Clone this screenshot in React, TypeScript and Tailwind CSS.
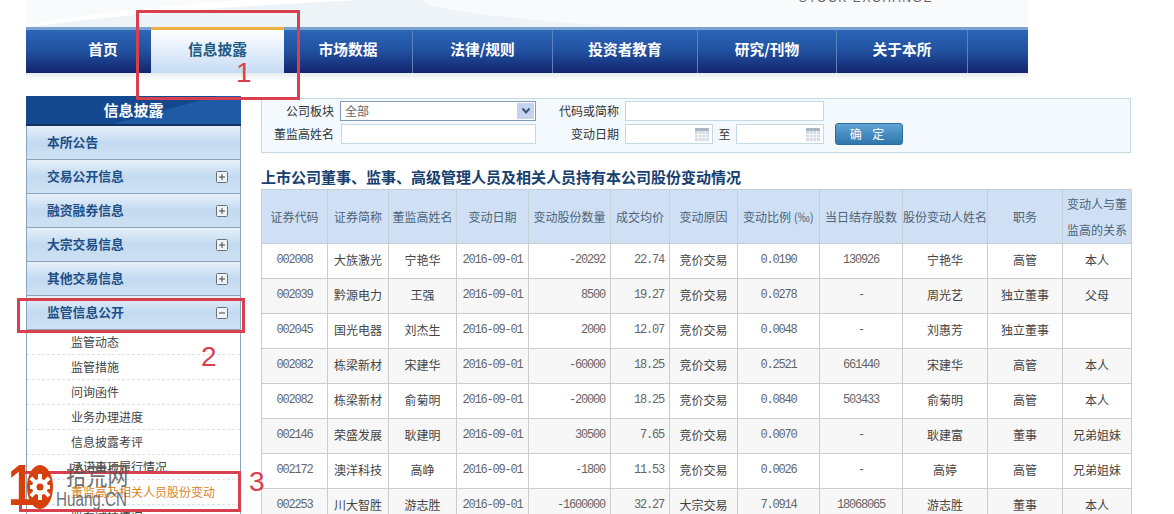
import React from "react";

const NAV = [
  { t: "首页", w: "w-[125px] pl-[29px]" },
  { t: "信息披露", w: "w-[133px]", active: true },
  { t: "市场数据", w: "w-[129px]" },
  { t: "法律/规则", w: "w-[140px]" },
  { t: "投资者教育", w: "w-[145px]" },
  { t: "研究/刊物", w: "w-[139px]" },
  { t: "关于本所", w: "w-[131px]" },
];

const SECTIONS = [
  { t: "本所公告" },
  { t: "交易公开信息", icon: "+" },
  { t: "融资融券信息", icon: "+" },
  { t: "大宗交易信息", icon: "+" },
  { t: "其他交易信息", icon: "+" },
  { t: "监管信息公开", icon: "-" },
];

const SUBS = [
  "监管动态",
  "监管措施",
  "问询函件",
  "业务办理进度",
  "信息披露考评",
  "承诺事项履行情况",
  "董监高及相关人员股份变动",
  "股东减持情况",
];

const COLS = [66, 61, 68, 72, 82, 59, 68, 82, 83, 85, 75, 69];

const HEAD = [
  "证券代码",
  "证券简称",
  "董监高姓名",
  "变动日期",
  "变动股份数量",
  "成交均价",
  "变动原因",
  "变动比例 (‰)",
  "当日结存股数",
  "股份变动人姓名",
  "职务",
  "变动人与董监高的关系",
];

const ROWS = [
  ["002008", "大族激光", "宁艳华", "2016-09-01", "-20292", "22.74", "竞价交易", "0.0190", "130926", "宁艳华", "高管", "本人"],
  ["002039", "黔源电力", "王强", "2016-09-01", "8500", "19.27", "竞价交易", "0.0278", "-", "周光艺", "独立董事", "父母"],
  ["002045", "国光电器", "刘杰生", "2016-09-01", "2000", "12.07", "竞价交易", "0.0048", "-", "刘惠芳", "独立董事", ""],
  ["002082", "栋梁新材", "宋建华", "2016-09-01", "-60000", "18.25", "竞价交易", "0.2521", "661440", "宋建华", "高管", "本人"],
  ["002082", "栋梁新材", "俞菊明", "2016-09-01", "-20000", "18.25", "竞价交易", "0.0840", "503433", "俞菊明", "高管", "本人"],
  ["002146", "荣盛发展", "耿建明", "2016-09-01", "30500", "7.65", "竞价交易", "0.0070", "-", "耿建富", "董事", "兄弟姐妹"],
  ["002172", "澳洋科技", "高峥", "2016-09-01", "-1800", "11.53", "竞价交易", "0.0026", "-", "高婷", "高管", "兄弟姐妹"],
  ["002253", "川大智胜", "游志胜", "2016-09-01", "-1600000", "32.27", "大宗交易", "7.0914", "18068065", "游志胜", "董事", "本人"],
];

const MONO = new Set([0, 3, 4, 5, 7, 8]);
const RIGHT = new Set([4, 5]);

function ToggleIcon({ kind }: { kind: string }) {
  return (
    <svg width="12" height="12" viewBox="0 0 12 12" className="shrink-0">
      <rect x="0.5" y="0.5" width="11" height="11" rx="1" fill="#eef3f7" stroke="#66727e" />
      <path d="M3 6H9" stroke="#444" strokeWidth="1" />
      {kind === "+" && <path d="M6 3V9" stroke="#444" strokeWidth="1" />}
    </svg>
  );
}

function CalendarIcon() {
  return (
    <svg width="14" height="13" viewBox="0 0 14 13" className="shrink-0">
      <rect x="0" y="0" width="14" height="13" fill="#d3dae2" />
      <rect x="0" y="0" width="14" height="3" fill="#aab6c4" />
      <path d="M0 6.5H14M0 9.5H14M3.5 3V13M7 3V13M10.5 3V13" stroke="#f5f7fa" strokeWidth="1" />
    </svg>
  );
}

function FormLabel({ w, children }: { w: string; children: React.ReactNode }) {
  return <div className={`${w} text-right text-[12px] leading-[18px] text-[#333] shrink-0`}>{children}</div>;
}

export default function App() {
  return (
    <div
      className="relative w-[1174px] h-[514px] overflow-hidden bg-white"
      style={{ fontFamily: '"Noto Sans CJK SC", "Liberation Sans", sans-serif' }}
    >
      {/* header */}
      <div className="ml-[26px] w-[1002px] h-[27px] overflow-hidden bg-[#f8fafc] flex justify-end relative">
        <svg width="1002" height="27" viewBox="0 0 1002 27" className="absolute left-0 top-0">
          <path d="M0 27C100 12 260 4 340 0H400C380 6 480 20 600 27Z" fill="#eef3f8" />
          <path d="M0 25C60 14 150 4 220 0H330C240 4 120 12 0 27Z" fill="#ffffff" />
        </svg>
        <div
          className="relative mr-[95px] -mt-[8px] h-[12px] text-[12px] leading-[12px] tracking-[1.6px] text-[#666]"
          style={{ fontFamily: '"Liberation Sans", sans-serif' }}
        >
          STOCK EXCHANGE
        </div>
      </div>

      {/* nav */}
      <div className="ml-[26px] w-[1002px] h-[46px] flex border-t-[3px] border-[#7ba3d0] bg-gradient-to-b from-[#2b66b8] via-[#21509f] to-[#13246c]">
        {NAV.map((n) =>
          n.active ? (
            <div
              key={n.t}
              className={`${n.w} -mt-[3px] h-[46px] pb-[5px] border-t-[3px] border-[#efb042] bg-gradient-to-b from-white to-[#c6dcf5] flex items-center justify-center text-[14.7px] font-bold text-[#1c5a85]`}
            >
              {n.t}
            </div>
          ) : (
            <div
              key={n.t}
              className={`${n.w} ${n.t === "首页" ? "" : "border-r border-[#5c84bb]"} pb-[5px] flex items-center justify-center text-[14.7px] font-bold text-white`}
            >
              {n.t}
            </div>
          )
        )}
      </div>
      <div className="ml-[26px] w-[1002px] h-[7px] bg-gradient-to-b from-[#e6ebf0] to-white" />

      {/* body */}
      <div className="flex pl-[26px] gap-[20px]">
        {/* sidebar */}
        <div className="w-[215px] mt-[16px] shrink-0">
          <div className="h-[30px] bg-[linear-gradient(165deg,#15498f_60%,#1f5aa6_60%)] border-b-2 border-[#15325f] flex items-center justify-center text-[15px] font-bold text-white">
            信息披露
          </div>
          <div className="border-x border-[#8aa5bb]">
            {SECTIONS.map((s) => (
              <div
                key={s.t}
                className="h-[34px] pl-[20px] pr-[12px] flex items-center justify-between border-b border-[#8aa5bb] bg-gradient-to-b from-[#e6f0fa] via-[#c3daf0] to-[#cfe1f3]"
              >
                <span className="text-[12.8px] font-bold text-[#1d4f86] -mt-[2px]">{s.t}</span>
                {s.icon && <ToggleIcon kind={s.icon} />}
              </div>
            ))}
            {SUBS.map((s, i) => (
              <div
                key={s}
                className={`h-[25px] pl-[44px] flex items-center border-b border-dashed border-[#e2e2e2] text-[12px] ${
                  i === 6 ? "text-[#d9841f]" : "text-[#444]"
                }`}
              >
                {s}
              </div>
            ))}
          </div>
        </div>

        {/* main */}
        <div className="w-[870px] mt-[18px] shrink-0">
          <div className="h-[55px] border border-[#c5d9e5] bg-[#f3f9fd] pt-[2px]">
            <div className="flex items-center h-[20px]">
              <FormLabel w="w-[72px]">公司板块</FormLabel>
              <div className="ml-[6px] w-[196px] h-[20px] border border-[#7f9db9] bg-white flex items-center justify-between pl-[4px] pr-[1px] text-[12px] text-[#666]">
                <span>全部</span>
                <span className="w-[17px] h-[16px] bg-[#c5d3f0] flex items-center justify-center">
                  <svg width="10" height="8" viewBox="0 0 10 8">
                    <path d="M1.5 1.5L5 5.5L8.5 1.5" fill="none" stroke="#3c5578" strokeWidth="2" />
                  </svg>
                </span>
              </div>
              <FormLabel w="w-[83px]">代码或简称</FormLabel>
              <div className="ml-[6px] w-[199px] h-[20px] border border-[#c5d9e5] bg-white" />
            </div>
            <div className="flex items-center h-[22px] mt-[2px]">
              <FormLabel w="w-[72px]">董监高姓名</FormLabel>
              <div className="ml-[7px] w-[195px] h-[20px] border border-[#c5d9e5] bg-white" />
              <FormLabel w="w-[83px]">变动日期</FormLabel>
              <div className="ml-[6px] w-[88px] h-[20px] border border-[#c5d9e5] bg-white flex items-center justify-end pr-[3px]">
                <CalendarIcon />
              </div>
              <div className="w-[23px] text-center text-[12px] text-[#333]">至</div>
              <div className="w-[88px] h-[20px] border border-[#c5d9e5] bg-white flex items-center justify-end pr-[3px]">
                <CalendarIcon />
              </div>
              <div className="ml-[11px] w-[68px] h-[22px] rounded-[3px] border border-[#2d6d9f] bg-gradient-to-b from-[#5fa4d3] to-[#2f76ad] flex items-center justify-center text-[12px] tracking-[4px] text-white">
                确 定
              </div>
            </div>
          </div>

          <div className="h-[36px] flex items-end pb-[2px] text-[15px] leading-[20px] font-bold text-[#16406f]">
            上市公司董事、监事、高级管理人员及相关人员持有本公司股份变动情况
          </div>

          <table className="w-[870px] table-fixed border-collapse text-[12px] text-[#444]">
            <colgroup>
              {COLS.map((c, i) => (
                <col key={i} style={{ width: c }} />
              ))}
            </colgroup>
            <thead>
              <tr className="h-[54px] bg-[#cfe0f5]">
                {HEAD.map((h, i) => (
                  <th
                    key={i}
                    className={`border border-[#c6ced8] font-normal text-[#4d6478] leading-[26px] p-0 ${
                      i === 11 ? "px-[3px]" : ""
                    } text-center`}
                  >
                    {h}
                  </th>
                ))}
              </tr>
            </thead>
            <tbody>
              {ROWS.map((r, ri) => (
                <tr key={ri} className={`h-[35px] ${ri % 2 === 1 ? "bg-[#f7f7f7]" : "bg-white"}`}>
                  {r.map((c, i) => (
                    <td
                      key={i}
                      className={`border border-[#cccccc] p-0 pb-[2px] ${RIGHT.has(i) ? "text-right pr-[5px]" : "text-center"} ${
                        MONO.has(i) ? "text-[12px] tracking-[-1.2px] text-[#666]" : ""
                      }`}
                      style={MONO.has(i) ? { fontFamily: '"Liberation Mono", monospace' } : undefined}
                    >
                      {c}
                    </td>
                  ))}
                </tr>
              ))}
            </tbody>
          </table>
        </div>
      </div>

      {/* annotation overlays */}
      <div className="absolute left-[136px] top-[10px] w-[164px] h-[90px] border-[3px] border-[#d9404f]" />
      <div className="absolute left-[17px] top-[298px] w-[228px] h-[35px] border-[3px] border-[#d9404f]" />
      <div className="absolute left-[19px] top-[471px] w-[222px] h-[41px] border-[3px] border-[#d9404f]" />
      <div
        className="absolute left-[236px] top-[59px] text-[28px] leading-[28px] text-[#d9404f]"
        style={{ fontFamily: '"Liberation Sans", sans-serif' }}
      >
        1
      </div>
      <div
        className="absolute left-[201px] top-[343px] text-[28px] leading-[28px] text-[#d9404f]"
        style={{ fontFamily: '"Liberation Sans", sans-serif' }}
      >
        2
      </div>
      <div
        className="absolute left-[249px] top-[468px] text-[28px] leading-[28px] text-[#d9404f]"
        style={{ fontFamily: '"Liberation Sans", sans-serif' }}
      >
        3
      </div>

      {/* watermark logo */}
      <div
        className="absolute left-[8px] top-[456px] text-[58px] leading-[58px] font-bold text-[#d6400c] scale-x-[0.8] origin-left"
        style={{ fontFamily: '"Liberation Sans", sans-serif' }}
      >
        1
      </div>
      <svg width="30" height="48" viewBox="0 0 30 48" className="absolute left-[25px] top-[463px]">
        <ellipse cx="15" cy="24" rx="13" ry="22" fill="#d6400c" />
        <g fill="#ffffff">
          <circle cx="15" cy="24" r="8" />
          <rect x="13" y="11" width="4" height="26" />
          <rect x="5" y="22" width="20" height="4" />
          <rect x="13" y="11" width="4" height="26" transform="rotate(45 15 24)" />
          <rect x="13" y="11" width="4" height="26" transform="rotate(-45 15 24)" />
        </g>
        <circle cx="15" cy="24" r="3.5" fill="#d6400c" />
      </svg>
      <div className="absolute left-[66px] top-[459px] text-[25px] leading-[30px] text-[#555] opacity-85 scale-x-[0.83] origin-left">
        拾荒网
      </div>
      <div
        className="absolute left-[56px] top-[488px] text-[20px] leading-[22px] text-[#5c6672] opacity-90 scale-x-[0.76] origin-left"
        style={{ fontFamily: '"Liberation Sans", sans-serif' }}
      >
        Huang.CN
      </div>
    </div>
  );
}
